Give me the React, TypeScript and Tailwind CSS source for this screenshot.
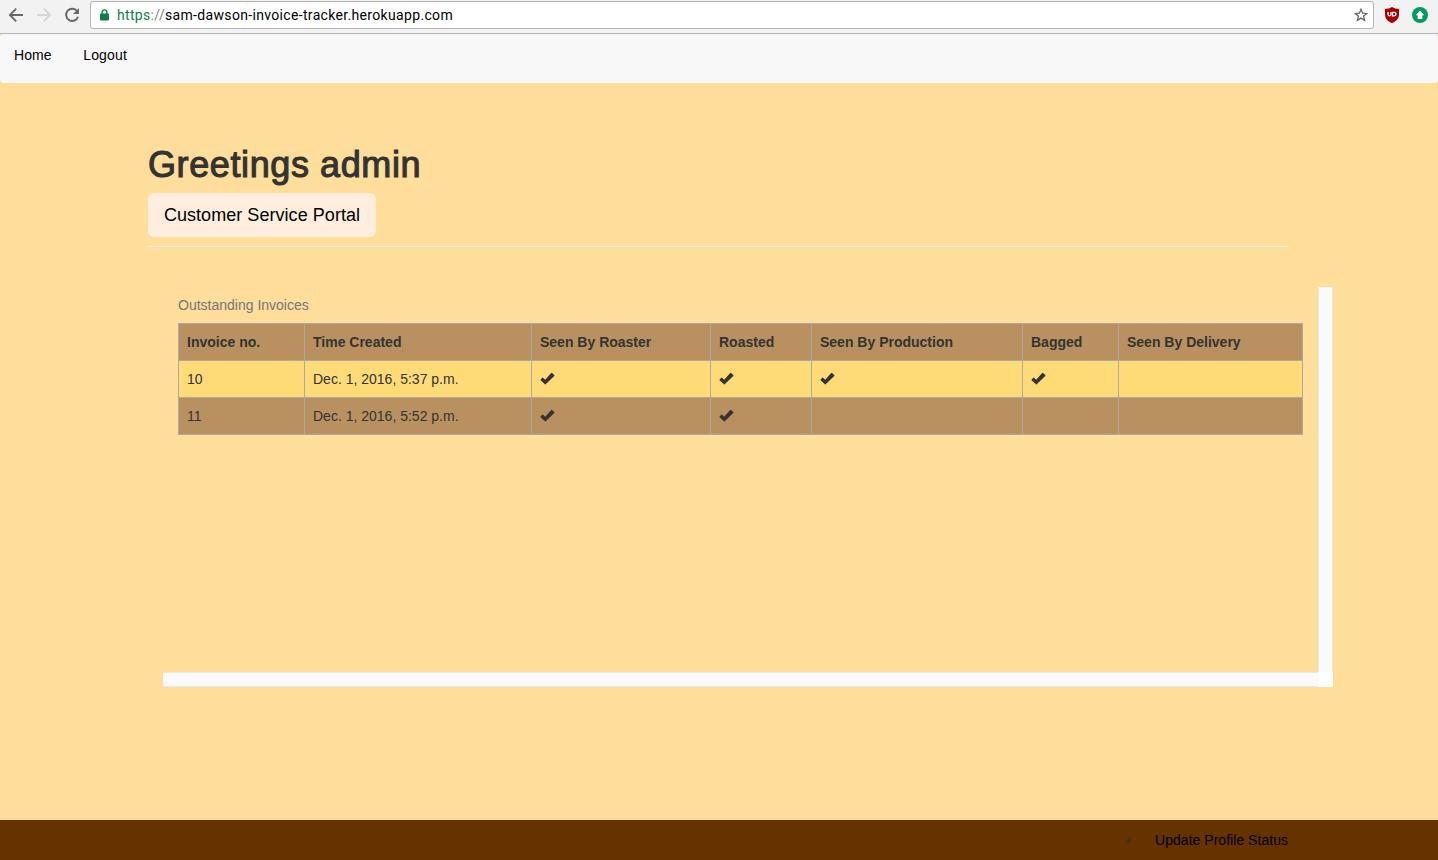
import React from "react";

const columns = [
  { label: "Invoice no.", width: "w-[126px]" },
  { label: "Time Created", width: "w-[227px]" },
  { label: "Seen By Roaster", width: "w-[179px]" },
  { label: "Roasted", width: "w-[101px]" },
  { label: "Seen By Production", width: "w-[211px]" },
  { label: "Bagged", width: "w-[96px]" },
  { label: "Seen By Delivery", width: "w-[184px]" },
];

const invoices = [
  { no: "10", created: "Dec. 1, 2016, 5:37 p.m.", steps: [true, true, true, true, false] },
  { no: "11", created: "Dec. 1, 2016, 5:52 p.m.", steps: [true, true, false, false, false] },
];

function Check() {
  return (
    <svg className="block h-[14px] w-[15px]" viewBox="0 0 15 14" fill="#333">
      <path d="M12 0.9 L14.3 3.1 Q14.600 3.500 14.300 3.900 L5.700 12.300 Q5.300 12.700 4.900 12.300 L0.600 8.300 Q0.200 7.900 0.600 7.500 L2.300 5.700 Q2.700 5.300 3.100 5.700 L5.200 7.700 L11.200 0.900 Q11.600 0.500 12 0.900 Z" />
    </svg>
  );
}

function BrowserBar() {
  return (
    <header className="flex h-[34px] items-start border-b border-[#b4b4b4] bg-[#f2f2f2]">
      <div className="flex h-[30px] w-[90px] shrink-0 items-center gap-[12px] pl-[8px]">
        <svg className="h-4 w-4" viewBox="0 0 16 16" fill="none" stroke="#6a6a6a" strokeWidth="1.9">
          <path d="M15 8H2M8.2 1.7L1.9 8l6.3 6.3" />
        </svg>
        <svg className="h-4 w-4" viewBox="0 0 16 16" fill="none" stroke="#d6d6d6" strokeWidth="1.9">
          <path d="M1 8h13M7.8 1.7L14.1 8l-6.3 6.3" />
        </svg>
        <svg className="h-4 w-4" viewBox="0 0 16 16">
          <path d="M13.2 4.3A6.1 6.1 0 1 0 14 9.7" fill="none" stroke="#6a6a6a" strokeWidth="2" />
          <path d="M15 1v6H9z" fill="#6a6a6a" />
        </svg>
      </div>
      <div className="mt-px flex h-[28px] w-[1284px] shrink-0 items-center rounded-[3px] border border-[#b4b4b4] bg-white pl-[9px] pr-[5px]">
        <svg className="h-[12px] w-[9px]" viewBox="0 0 9 12">
          <path d="M2.1 6V3.3a2.4 2.4 0 0 1 4.8 0V6" fill="none" stroke="#0b8043" strokeWidth="1.3" />
          <rect x="0" y="4.6" width="9" height="6.8" rx="0.8" fill="#0b8043" />
        </svg>
        <span className="ml-[8px] whitespace-nowrap font-[Roboto,sans-serif] text-[14px] leading-[18px] tracking-[0.33px] text-black">
          <span className="text-[#0b8043]">https</span>
          <span className="text-[#808080]">://</span>sam-dawson-invoice-tracker.herokuapp.com
        </span>
        <svg className="ml-auto h-[14px] w-[14px]" viewBox="0 0 14 14" fill="none" stroke="#666" strokeWidth="1.3">
          <path d="M7 1.3l1.6 3.9 4.2.3-3.2 2.7 1 4.1L7 10.1l-3.6 2.2 1-4.1L1.200 5.500l4.200-.3z" />
        </svg>
      </div>
      <div className="flex h-[30px] items-center gap-[12px] pl-[10px]">
        <svg className="h-4 w-4" viewBox="0 0 16 16">
          <path d="M8 0c2 1.3 4.500 1.900 7 2v5c0 5-3 7.500-7 9-4-1.500-7-4-7-9V2C3.500 1.900 6 1.300 8 0z" fill="#a50000" />
          <path d="M4 5v2.300a1.500 1.500 0 0 0 3 0V5" fill="none" stroke="#fff" strokeWidth="1.300" />
          <path d="M8.500 5.400h1.800a1.700 1.700 0 0 1 0 3.400H8.500z" fill="none" stroke="#fff" strokeWidth="1.300" />
        </svg>
        <svg className="h-4 w-4" viewBox="0 0 16 16">
          <circle cx="8" cy="8" r="8" fill="#069b5c" />
          <path d="M8 3.500l4.200 4.700H10.300V12H5.700V8.200H3.800z" fill="#fff" />
        </svg>
      </div>
    </header>
  );
}

export default function App() {
  return (
    <div className="flex h-[860px] w-[1438px] flex-col overflow-hidden bg-[#ffdd9b] font-['Liberation_Sans',Arial,sans-serif] text-[14px] leading-[20px] text-[#333]">
      <BrowserBar />
      <nav className="flex h-[49px] shrink-0 gap-[32px] rounded-[4px] bg-[#f8f8f8] pl-[14px] pt-[11px] text-black">
        <a className="tracking-[0.1px]">Home</a>
        <a className="-ml-[0.5px] tracking-[0.15px]">Logout</a>
      </nav>
      <main className="flex flex-1 flex-col pl-[148px] pt-[62px]">
        <h1 className="h-[48px] whitespace-nowrap text-[36px] leading-[40px] tracking-[0.6px] [-webkit-text-stroke:1.1px_#333]">
          Greetings admin
        </h1>
        <button className="h-[44px] w-[228px] whitespace-nowrap rounded-[6px] bg-[#ffeedd] text-[18px] leading-[24px] tracking-[0.05px] text-black">
          Customer Service Portal
        </button>
        <hr className="mt-[9px] h-px w-[1140px] border-0 bg-[#eeeeee]" />
        <section className="ml-[15px] mt-[40px] grid h-[400px] w-[1170px] grid-cols-[1155px_15px] grid-rows-[385px_15px]">
          <div className="px-[15px]">
            <table className="w-[1124px] table-fixed border-collapse">
              <caption className="pb-[8px] pt-[8px] text-left text-[#777]">Outstanding Invoices</caption>
              <thead>
                <tr className="h-[37px] bg-[#b99160]">
                  {columns.map((column) => (
                    <th key={column.label} className={`${column.width} border border-[#aaaaaa] px-[8px] py-0 text-left font-bold`}>
                      {column.label}
                    </th>
                  ))}
                </tr>
              </thead>
              <tbody>
                {invoices.map((invoice) => (
                  <tr key={invoice.no} className="h-[37px] odd:bg-[#ffdb78] even:bg-[#b99160]">
                    <td className="border border-[#aaaaaa] px-[8px]">{invoice.no}</td>
                    <td className="border border-[#aaaaaa] px-[8px]">{invoice.created}</td>
                    {invoice.steps.map((done, i) => (
                      <td key={i} className="border border-[#aaaaaa] px-[8px]">{done && <Check />}</td>
                    ))}
                  </tr>
                ))}
              </tbody>
            </table>
          </div>
          <div className="border-x border-[#e8e8e8] bg-[#fafafa]" />
          <div className="border-y border-[#e8e8e8] bg-[#fafafa]" />
          <div className="bg-white" />
        </section>
      </main>
      <footer className="flex h-[40px] shrink-0 items-center justify-end bg-[#663300] pr-[150px]">
        <span className="mr-[24px] mt-[2px] h-[4px] w-[4px] rounded-full bg-[#333]" />
        <a className="tracking-[0.03px] text-black">Update Profile Status</a>
      </footer>
    </div>
  );
}
